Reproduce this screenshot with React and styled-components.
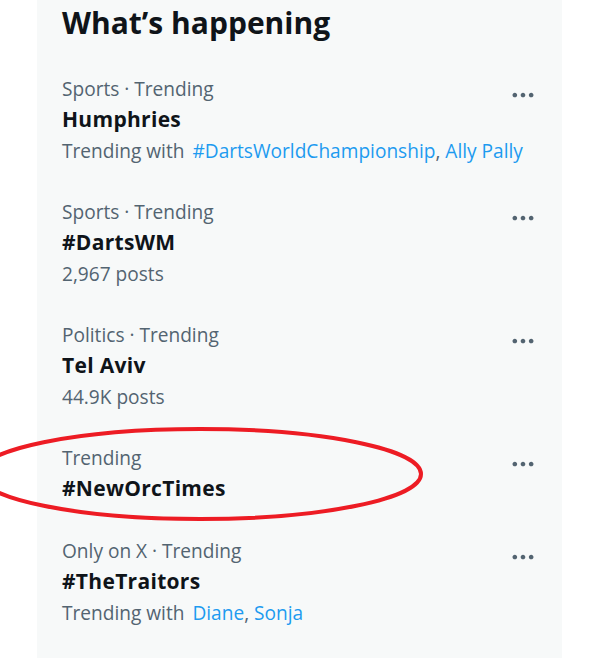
import React from "react";
import styled, { createGlobalStyle } from "styled-components";

const GlobalStyle = createGlobalStyle`
    html, body {
        margin: 0;
        padding: 0;
        background: #ffffff;
        font-family: "Open Sans", "Noto Sans", sans-serif;
        overflow: hidden;
    }
`;

const Page = styled.div`
    position: relative;
    width: 596px;
    height: 658px;
    overflow: hidden;
`;

const Panel = styled.section`
    margin: -14px 0 0 37px;
    width: 525px;
    min-height: 700px;
    background: #f7f9f9;
    border-radius: 16px;
`;

const Title = styled.h2`
    margin: 0;
    padding: 18.7px 25px 17.3px;
    font-size: 30px;
    line-height: 36px;
    font-weight: 700;
    color: #0f1419;
`;

const Item = styled.div`
    display: flex;
    align-items: flex-start;
    padding: 16px 25px;
`;

const Body = styled.div`
    flex: 1;
    min-width: 0;
`;

const Meta = styled.div`
    font-size: 19.1px;
    line-height: 30px;
    color: #536471;
`;

const Name = styled.div`
    font-size: 21px;
    line-height: 31px;
    font-weight: 700;
    letter-spacing: 0.3px;
    color: #0f1419;
`;

const Sub = styled.div`
    padding-top: 3px;
    font-size: 19.1px;
    line-height: 27px;
    color: #536471;
    white-space: nowrap;
`;

const Links = styled.span`
    margin-left: 8px;
`;

const Tag = styled.span`
    color: #1d9bf0;
`;

const More = styled.button`
    flex: none;
    margin: 7px 0 0 0;
    padding: 0;
    border: none;
    background: none;
    width: 28px;
    height: 28px;
    color: #536471;
    svg {
        display: block;
        width: 28px;
        height: 28px;
        fill: currentColor;
    }
`;

const Annotation = styled.svg`
    position: absolute;
    left: 0;
    top: 0;
    pointer-events: none;
`;

const trends = [
    { meta: "Sports · Trending", name: "Humphries", tags: ["#DartsWorldChampionship", "Ally Pally"] },
    { meta: "Sports · Trending", name: "#DartsWM", posts: "2,967 posts" },
    { meta: "Politics · Trending", name: "Tel Aviv", posts: "44.9K posts" },
    { meta: "Trending", name: "#NewOrcTimes" },
    { meta: "Only on X · Trending", name: "#TheTraitors", tags: ["Diane", "Sonja"] },
];

const MoreIcon = () => (
    <svg viewBox="0 0 24 24">
        <path d="M3 12c0-1.1.9-2 2-2s2 .9 2 2-.9 2-2 2-2-.9-2-2zm9 2c1.1 0 2-.9 2-2s-.9-2-2-2-2 .9-2 2 .9 2 2 2zm7 0c1.1 0 2-.9 2-2s-.9-2-2-2-2 .9-2 2 .9 2 2 2z" />
    </svg>
);

const Trend = ({ meta, name, posts, tags }) => (
    <Item>
        <Body>
            <Meta>{meta}</Meta>
            <Name>{name}</Name>
            {posts && <Sub>{posts}</Sub>}
            {tags && (
                <Sub>
                    Trending with
                    <Links>
                        {tags.map((t, i) => (
                            <React.Fragment key={t}>
                                {i > 0 && ", "}
                                <Tag>{t}</Tag>
                            </React.Fragment>
                        ))}
                    </Links>
                </Sub>
            )}
        </Body>
        <More aria-label="More">
            <MoreIcon />
        </More>
    </Item>
);

const App = () => (
    <Page>
        <GlobalStyle />
        <Panel>
            <Title>What’s happening</Title>
            {trends.map((t) => (
                <Trend key={t.name} {...t} />
            ))}
        </Panel>
        <Annotation width="596" height="658" viewBox="0 0 596 658">
            <ellipse cx="200" cy="474" rx="221" ry="45" fill="none" stroke="#ed1c24" strokeWidth="4" />
        </Annotation>
    </Page>
);

export default App;
